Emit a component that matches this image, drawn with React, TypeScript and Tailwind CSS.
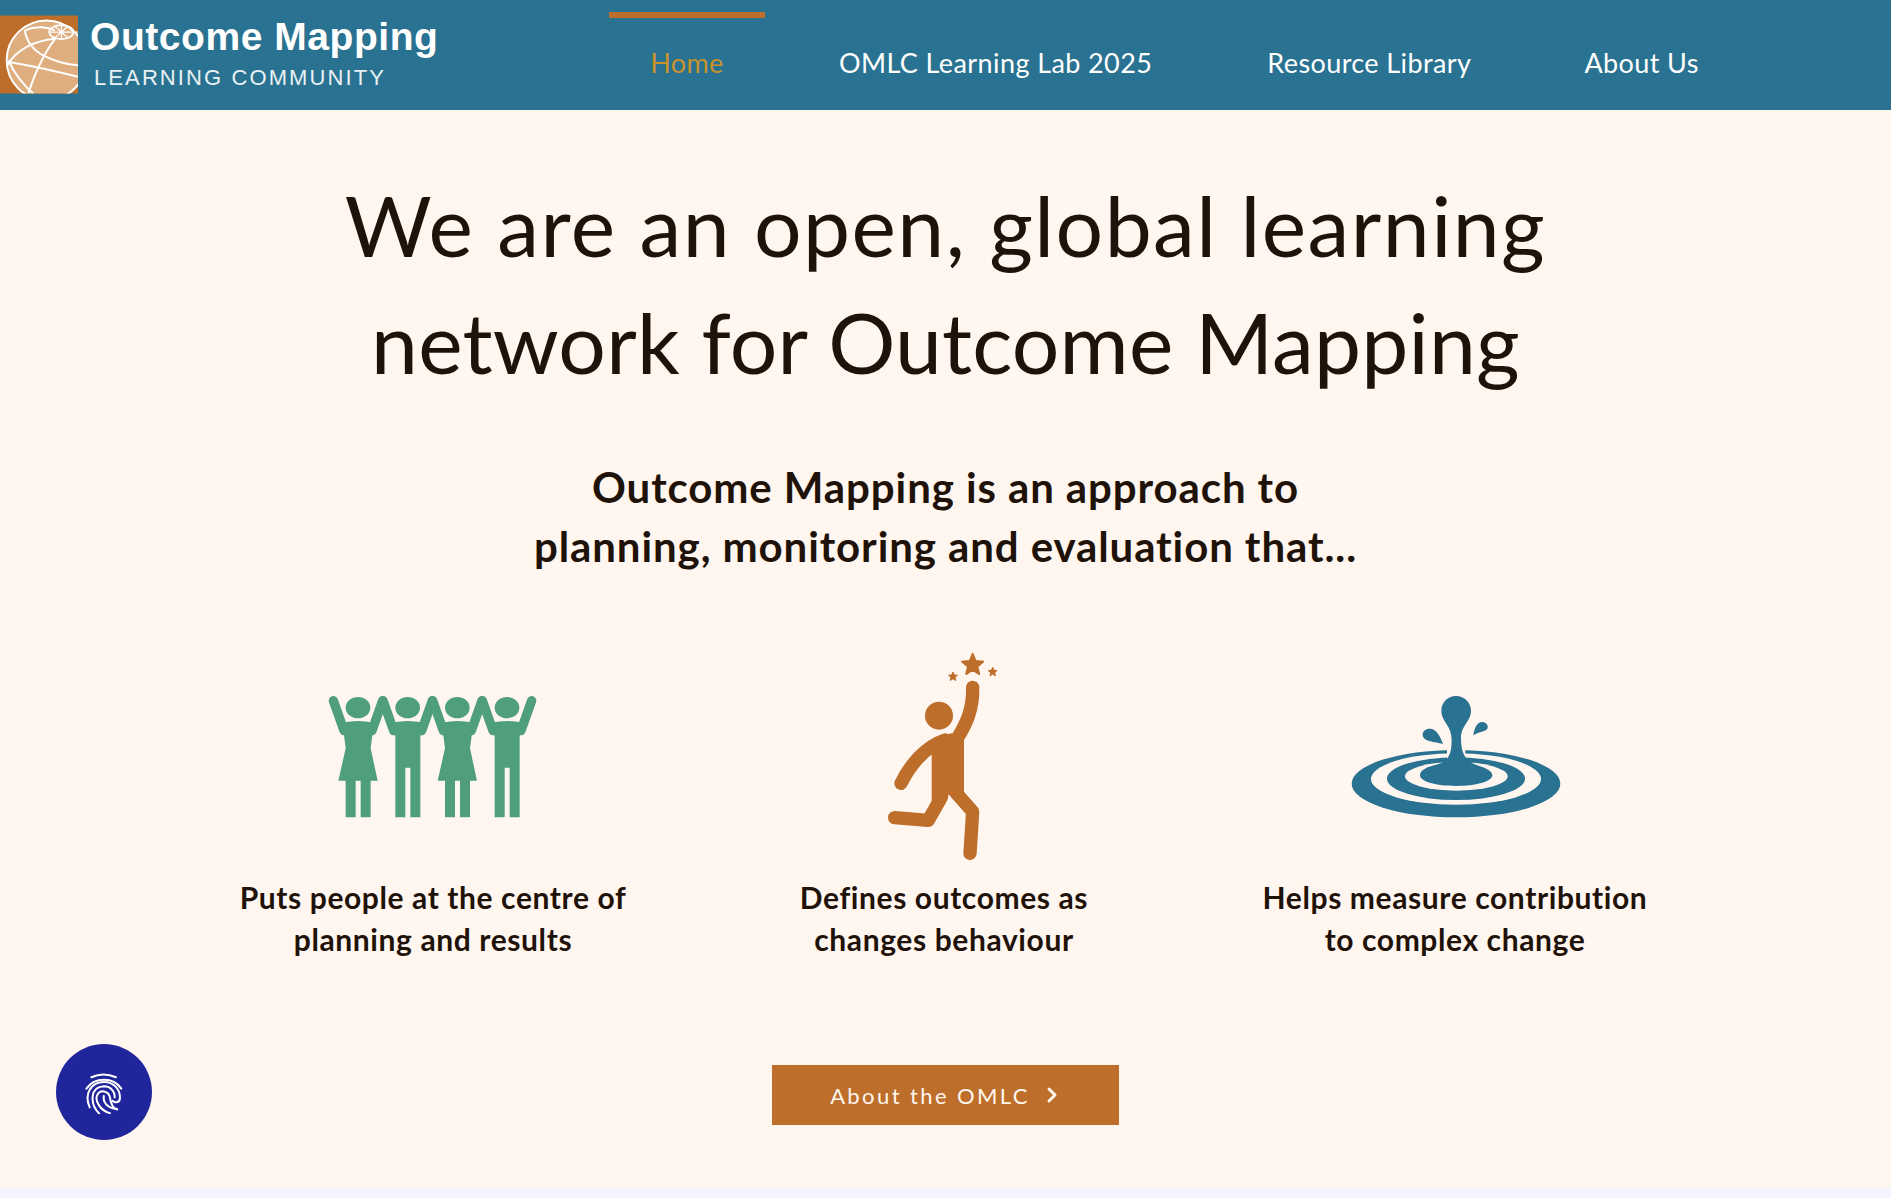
import { ChevronRight } from 'lucide-react';

const FONT = "font-['Lato','Noto_Sans',sans-serif]";

function starPoints(cx: number, cy: number, r: number) {
  const pts: string[] = [];
  for (let i = 0; i < 10; i++) {
    const rad = i % 2 === 0 ? r : r * 0.45;
    const a = (Math.PI / 5) * i - Math.PI / 2;
    pts.push(`${cx + rad * Math.cos(a)},${cy + rad * Math.sin(a)}`);
  }
  return pts.join(' ');
}

function Logo() {
  return (
    <div className="flex items-center">
      <svg viewBox="0 0 235 235" className="w-[78px] h-[79px] mt-[-1px] shrink-0">
        <defs>
          <clipPath id="logo-clip">
            <rect width="235" height="235" />
          </clipPath>
        </defs>
        <rect width="235" height="235" fill="#bd6e2a" />
        <g clipPath="url(#logo-clip)" fill="none" stroke="#fff" strokeWidth="6">
          <circle cx="140" cy="135" r="120" fill="#dfae7e" />
          {/* meridians and parallels, all drawn round the pole at 185,50 */}
          <path d="M168 68 C130 115 105 175 85 235" />
          <path d="M75 45 C78 75 100 105 130 120 C165 138 200 148 235 150" />
          <path d="M22 150 C50 100 110 75 165 70" />
          <path d="M26 135 C40 170 70 210 100 235" />
          <path d="M28 140 C85 150 160 165 235 185" />
          <path d="M75 45 C110 30 145 35 165 45" />
          <ellipse cx="185" cy="50" rx="37" ry="21" strokeWidth="5" />
          <path d="M150 50 H235 M165 32 L205 68 M205 32 L165 68 M185 30 V70" strokeWidth="4" />
        </g>
      </svg>
      <div className="ml-[12px] -mt-[4px] font-['Liberation_Sans',sans-serif] text-white">
        <p className="text-[39px] leading-[42px] font-bold tracking-[0.55px]">Outcome Mapping</p>
        <p className="ml-[4px] mt-[7px] text-[22px] leading-[26px] tracking-[2.1px] text-white/90">LEARNING COMMUNITY</p>
      </div>
    </div>
  );
}

function Woman({ dx }: { dx: number }) {
  return (
    <g transform={`translate(${dx} 0)`}>
      <ellipse cx="142" cy="113" rx="37" ry="32" />
      <path d="M68 92 L100 182 M216 92 L184 182" fill="none" stroke="#4f9f7b" strokeWidth="28" strokeLinecap="round" />
      <path d="M95 158 Q142 148 190 158 L180 235 L201 332 L180 332 L180 442 L150 442 L150 332 L135 332 L135 442 L105 442 L105 332 L83 332 L105 235 Z" />
    </g>
  );
}

function Man({ dx }: { dx: number }) {
  return (
    <g transform={`translate(${dx} 0)`}>
      <ellipse cx="142" cy="113" rx="37" ry="32" />
      <path d="M68 92 L100 182 M216 92 L184 182" fill="none" stroke="#4f9f7b" strokeWidth="28" strokeLinecap="round" />
      <path d="M95 158 Q142 148 190 158 L180 200 L180 442 L150 442 L150 293 L135 293 L135 442 L105 442 L105 200 Z" />
    </g>
  );
}

function PeopleIcon() {
  return (
    <svg viewBox="-5 0 720 510" className="w-[240px] h-[170px]" fill="#4f9f7b">
      <Woman dx={0} />
      <Man dx={149} />
      <Woman dx={298} />
      <Man dx={447} />
    </svg>
  );
}

function RunnerIcon() {
  return (
    <svg viewBox="0 0 480 690" className="w-[160px] h-[230px]" fill="#bd6e2a">
      <polygon points={starPoints(338, 75, 34)} stroke="#bd6e2a" strokeWidth="5" strokeLinejoin="round" />
      <polygon points={starPoints(279, 110, 14)} stroke="#bd6e2a" strokeWidth="3" strokeLinejoin="round" />
      <polygon points={starPoints(398, 96, 14)} stroke="#bd6e2a" strokeWidth="3" strokeLinejoin="round" />
      <circle cx="237" cy="227" r="42" />
      <g fill="none" stroke="#bd6e2a" strokeWidth="40" strokeLinecap="round" strokeLinejoin="round">
        <path d="M338 142 C340 205 320 250 292 295" />
        <path d="M123 430 C150 375 195 320 255 300" />
        <path d="M104 533 L205 541 L245 470" />
        <path d="M330 640 L338 515 L285 455" />
      </g>
      <path d="M215 345 L215 485 L265 465 L312 455 L312 300 L275 280 L235 290 Z" />
    </svg>
  );
}

function WaterIcon() {
  return (
    <svg viewBox="0 -30 720 510" className="w-[240px] h-[170px]">
      <ellipse cx="375" cy="311" rx="313" ry="101" fill="#297291" />
      <ellipse cx="375" cy="297" rx="255" ry="77" fill="#fff6f0" />
      <ellipse cx="375" cy="296" rx="207" ry="64" fill="#297291" />
      <ellipse cx="376" cy="289" rx="154" ry="43" fill="#fff6f0" />
      <path d="M348 200 H403 V243 H348 Z" fill="#fff6f0" />
      <path
        fill="#297291"
        d="M375 48 C400 48 420 68 420 92 C420 125 390 135 390 175 C390 225 405 245 445 258 C470 266 484 275 484 286 C484 305 435 318 375 318 C315 318 267 305 267 286 C267 270 290 260 320 253 C350 245 362 225 362 180 C362 135 331 125 331 92 C331 68 350 48 375 48 Z"
      />
      <path fill="#297291" d="M336 192 C310 185 276 185 275 165 C275 150 290 145 303 147 C318 152 328 170 336 192 Z" />
      <path fill="#297291" d="M427 166 C430 145 438 125 455 126 C468 127 474 140 468 148 C460 156 442 156 427 166 Z" />
    </svg>
  );
}

function FingerprintIcon() {
  return (
    <svg viewBox="130 115 125 130" className="w-[42px] h-[44px]" fill="none" stroke="#fff" strokeWidth="6" strokeLinecap="round">
      <path d="M155 136 Q191 120 228 136" />
      <path d="M140 170 C165 135 220 135 244 170" />
      <path d="M150 226 C132 185 155 150 192 150 C222 150 240 172 240 196 C240 212 226 214 218 206" />
      <path d="M178 244 C150 215 150 165 192 163 C215 163 226 182 224 196" />
      <path d="M210 243 C180 235 165 205 172 190 C180 172 205 175 210 195 C212 212 220 232 232 232" />
      <path d="M192 192 C188 212 205 228 230 230" />
    </svg>
  );
}

const features = [
  { icon: <PeopleIcon />, lines: ['Puts people at the centre of', 'planning and results'] },
  { icon: <RunnerIcon />, lines: ['Defines outcomes as', 'changes behaviour'] },
  { icon: <WaterIcon />, lines: ['Helps measure contribution', 'to complex change'] },
];

export default function App() {
  return (
    <div className={`${FONT} min-h-screen bg-[#fff6f0] text-[#1f1209]`}>
      <header className="h-[110px] bg-[#297291] flex">
        <div className="w-[609px] h-full flex items-center">
          <Logo />
        </div>
        <nav className="flex items-start text-[27px] leading-[34px] tracking-[0.4px] whitespace-nowrap text-white pt-[46px]">
          {/* active tab keeps its bar at the top of the header */}
          <a href="#" className="relative w-[156px] text-center text-[#c7922c]">
            Home
            <span className="absolute left-0 right-0 -top-[34px] h-[6px] bg-[#bd6e2a]" />
          </a>
          <a href="#" className="ml-[74px]">OMLC Learning Lab 2025</a>
          <a href="#" className="ml-[115px]">Resource Library</a>
          <a href="#" className="ml-[113px]">About Us</a>
        </nav>
      </header>

      <main className="h-[1078px] flex flex-col items-center pt-[56px]">
        <h1 className="text-[84px] leading-[117px] text-center font-normal">
          <span className="tracking-[1.45px]">We are an open, global learning</span>
          <br />
          <span className="tracking-[0.2px]">network for Outcome Mapping</span>
        </h1>
        <h2 className="mt-[58px] text-[42px] leading-[59px] font-bold text-center tracking-[0.9px]">
          Outcome Mapping is an approach to
          <br />
          planning, monitoring and evaluation that...
        </h2>
        <div className="mt-[64px] mr-[3px] w-[1533px] grid grid-cols-3">
          {features.map((f) => (
            <div key={f.lines[0]} className="flex flex-col items-center">
              <div className="h-[230px] mr-[8px] flex items-center justify-center">{f.icon}</div>
              <p className="mt-[6px] text-[30px] leading-[42px] font-bold text-center tracking-[0.6px]">
                {f.lines[0]}
                <br />
                {f.lines[1]}
              </p>
            </div>
          ))}
        </div>
        <a
          href="#"
          className="mt-[105px] w-[347px] h-[60px] pl-[3px] bg-[#bd6e2a] text-[#fff6f0] flex items-center justify-center gap-[10px] text-[22px] tracking-[2.4px]"
        >
          About the OMLC
          <ChevronRight className="w-[24px] h-[24px]" strokeWidth={3} />
        </a>
      </main>
      <div className="h-[10px] bg-[#f3f4fd]" />

      <button className="fixed left-[56px] top-[1044px] w-[96px] h-[96px] rounded-full bg-[#21259c] flex items-center justify-center">
        <FingerprintIcon />
      </button>
    </div>
  );
}
